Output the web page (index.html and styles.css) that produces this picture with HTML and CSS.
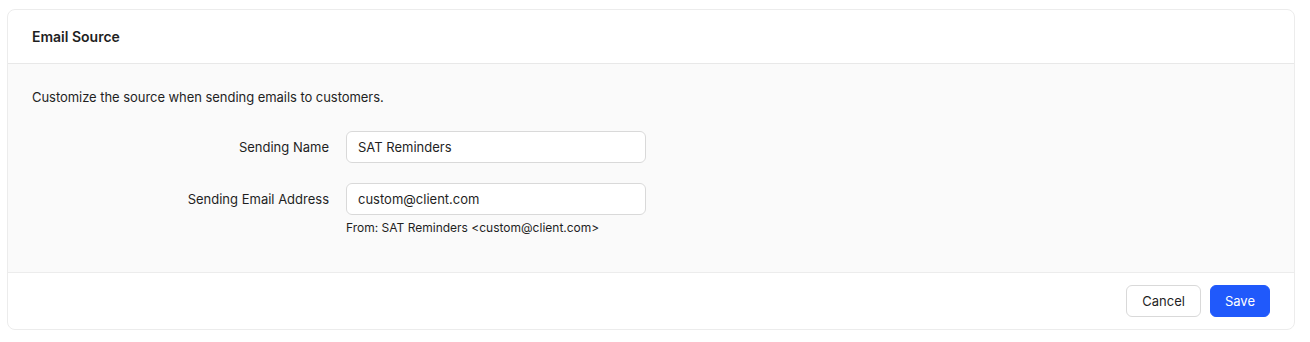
FILE: index.html
```html
<!DOCTYPE html>
<html lang="en">
<head>
  <meta charset="UTF-8" />
  <title>Email Source</title>
  <link rel="stylesheet" href="styles.css">
</head>
<body>
  <div class="card">
    <div class="card-header">
      <h2>Email Source</h2>
    </div>
    <div class="card-body">
      <p class="desc">Customize the source when sending emails to customers.</p>
      <div class="field">
        <label class="label" for="sendingName">Sending Name</label>
        <div class="control">
          <input type="text" id="sendingName" value="SAT Reminders">
        </div>
      </div>
      <div class="field">
        <label class="label" for="sendingEmail">Sending Email Address</label>
        <div class="control">
          <input type="text" id="sendingEmail" value="custom@client.com">
          <div class="hint">From: SAT Reminders &lt;custom@client.com&gt;</div>
        </div>
      </div>
    </div>
    <div class="card-footer">
      <button type="button" class="btn">Cancel</button>
      <button type="button" class="btn btn-primary">Save</button>
    </div>
  </div>
</body>
</html>
```

FILE: styles.css
```css
body {
  font-family: Inter, "Noto Sans", sans-serif;
  margin: 9px 15px 8px 7px;
  color: #1f1f1f;
  background: #fff;
}
.card {
  border: 1px solid #ececec;
  border-radius: 8px;
  overflow: hidden;
}
.card-header {
  height: 53px;
  display: flex;
  align-items: center;
  padding: 0 24px;
  border-bottom: 1px solid #e8e8e8;
}
.card-header h2 {
  margin: 0;
  font-size: 14px;
  font-weight: 600;
}
.card-body {
  background: #fafafa;
  padding: 23px 24px 36px;
  border-bottom: 1px solid #ececec;
}
.desc {
  margin: 0 0 24px;
  font-size: 13px;
  letter-spacing: -0.05px;
  line-height: 20px;
}
.field {
  display: flex;
  align-items: flex-start;
  gap: 17px;
  margin-bottom: 20px;
}
.field:last-child {
  margin-bottom: 0;
}
.label {
  width: 297px;
  height: 32px;
  text-align: right;
  font-size: 13px;
  line-height: 33px;
}
.control input {
  box-sizing: border-box;
  width: 300px;
  height: 32px;
  padding: 0 11px;
  border: 1px solid #d9d9d9;
  border-radius: 6px;
  background: #fff;
  font-family: inherit;
  font-size: 13px;
  color: #1f1f1f;
}
.hint {
  margin-top: 5px;
  font-size: 12px;
  line-height: 16px;
}
.card-footer {
  display: flex;
  justify-content: flex-end;
  gap: 9px;
  padding: 12px 24px 12px;
}
.btn {
  height: 32px;
  padding: 0 15px;
  border: 1px solid #d9d9d9;
  border-radius: 6px;
  background: #fff;
  font-family: inherit;
  font-size: 13px;
  color: #1f1f1f;
  cursor: pointer;
}
.btn-primary {
  background: #2059fb;
  border-color: #2059fb;
  color: #fff;
  padding: 0 14px;
}
```
